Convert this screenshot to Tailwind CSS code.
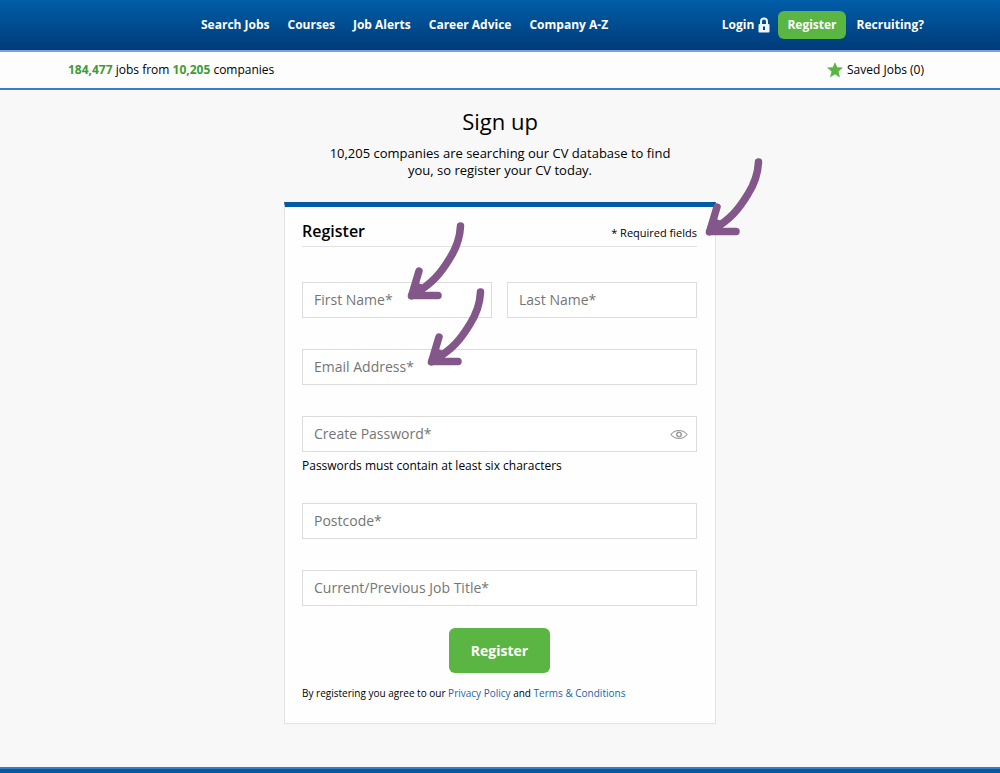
<!DOCTYPE html>
<html lang="en">
<head>
    <meta charset="UTF-8">
    <meta name="viewport" content="width=device-width, initial-scale=1.0">
    <title>Sign up</title>
    <script src="https://cdn.jsdelivr.net/npm/@tailwindcss/browser@4"></script>
</head>
<body class="bg-[#f8f8f8] text-black font-['Open_Sans',sans-serif] text-[12px]">
    <div class="min-h-screen flex flex-col">
        <header class="bg-linear-to-b from-[#005ea8] to-[#003b79] border-b-2 border-[#7f9fdc] text-white font-bold">
            <div class="max-w-[864px] h-[50px] mx-auto pr-2 flex items-center justify-between">
                <nav class="flex gap-[18px] pl-[133px]">
                    <a href="#">Search Jobs</a>
                    <a href="#">Courses</a>
                    <a href="#">Job Alerts</a>
                    <a href="#">Career Advice</a>
                    <a href="#">Company A-Z</a>
                </nav>
                <div class="flex items-center">
                    <a href="#" class="flex items-center gap-1 mr-2">
                        Login
                        <svg class="w-3 h-4" viewBox="0 0 12 16" fill="none">
                            <path d="M3 8V4.500a3 3 0 0 1 6 0V8" stroke="#eef4fb" stroke-width="2"/>
                            <rect x="0.5" y="7" width="11" height="8.5" rx="1" fill="#eef4fb"/>
                            <path d="M6 9.500v3.500" stroke="#00468a" stroke-width="2"/>
                        </svg>
                    </a>
                    <a href="#" class="bg-[#5bb543] rounded-md h-7 px-[9px] flex items-center mr-[11px]">Register</a>
                    <a href="#">Recruiting?</a>
                </div>
            </div>
        </header>

        <div class="bg-[#fdfdfd] border-b-2 border-[#3a7dc6]">
            <div class="max-w-[864px] h-9 mx-auto pr-2 flex items-center justify-between">
                <p><span class="text-[#3f9c35] font-bold">184,477</span> jobs from <span class="text-[#3f9c35] font-bold">10,205</span> companies</p>
                <a href="#" class="flex items-center gap-1">
                    <svg class="w-4 h-4" viewBox="0 0 16 16" fill="#5bb543">
                        <path d="M8 0l2.200 5.300 5.800.300-4.500 3.900L13 15.500l-5-3.200-5 3.200 1.500-6L0 5.600l5.800-.3z"/>
                    </svg>
                    Saved Jobs (0)
                </a>
            </div>
        </div>

        <main class="flex-grow flex flex-col items-center pt-[15px]">
            <h1 class="text-[22px] leading-8">Sign up</h1>
            <p class="w-[350px] mt-2 leading-[17px] text-[13px] text-center">10,205 companies are searching our CV database to find you, so register your CV today.</p>

            <form class="relative w-full max-w-[432px] mt-[23px] mb-[43px] pl-[17px] pr-[18px] bg-[#fefefe] border border-[#e2e2e2] border-t-5 border-t-[#005ba4]">
                <div class="flex items-center justify-between h-10 pt-2 border-b border-[#e2e2e2]">
                    <h2 class="text-[16px] font-semibold">Register</h2>
                    <p class="text-[11px] pt-1.5">* Required fields</p>
                </div>

                <div class="grid grid-cols-2 gap-x-[15px] gap-y-[31px] pt-[35px] text-[14px] leading-[22px]">
                    <div>
                        <label for="firstName" class="sr-only">First Name</label>
                        <input type="text" id="firstName" placeholder="First Name*" class="block w-full py-1.5 px-[11px] bg-white border border-[#dcdcdc] placeholder-[#757575]">
                    </div>
                    <div>
                        <label for="lastName" class="sr-only">Last Name</label>
                        <input type="text" id="lastName" placeholder="Last Name*" class="block w-full py-1.5 px-[11px] bg-white border border-[#dcdcdc] placeholder-[#757575]">
                    </div>
                    <div class="col-span-2">
                        <label for="email" class="sr-only">Email Address</label>
                        <input type="email" id="email" placeholder="Email Address*" class="block w-full py-1.5 px-[11px] bg-white border border-[#dcdcdc] placeholder-[#757575]">
                    </div>
                    <div class="col-span-2">
                        <label for="password" class="sr-only">Create Password</label>
                        <div class="relative">
                            <input type="password" id="password" placeholder="Create Password*" class="block w-full py-1.5 pl-[11px] pr-10 bg-white border border-[#dcdcdc] placeholder-[#757575]">
                            <button type="button" aria-label="Show password" class="absolute right-[9px] top-3">
                                <svg class="block w-[18px] h-3" viewBox="0 0 18 12" fill="none" stroke="#9c9c9c">
                                    <path d="M1 6.500c2-2.700 5-4 8-4s6 1.300 8 4c-2 2.700-5 4-8 4s-6-1.300-8-4z" stroke-width="1.200"/>
                                    <circle cx="9" cy="6.500" r="2.200" stroke-width="1.500"/>
                                </svg>
                            </button>
                        </div>
                        <p class="mt-1 leading-5 text-[12px]">Passwords must contain at least six characters</p>
                    </div>
                    <div class="col-span-2 -mt-1">
                        <label for="postcode" class="sr-only">Postcode</label>
                        <input type="text" id="postcode" placeholder="Postcode*" class="block w-full py-1.5 px-[11px] bg-white border border-[#dcdcdc] placeholder-[#757575]">
                    </div>
                    <div class="col-span-2">
                        <label for="jobTitle" class="sr-only">Current/Previous Job Title</label>
                        <input type="text" id="jobTitle" placeholder="Current/Previous Job Title*" class="block w-full py-1.5 px-[11px] bg-white border border-[#dcdcdc] placeholder-[#757575]">
                    </div>
                </div>

                <button type="submit" class="block mx-auto mt-[22px] w-[101px] h-[45px] rounded-md bg-[#5bb543] text-white text-[14px] font-bold">Register</button>
                <p class="mt-3 mb-[22px] leading-4 text-[10px]">By registering you agree to our <a href="#" class="text-[#1d64a8]">Privacy Policy</a> and <a href="#" class="text-[#1d64a8]">Terms &amp; Conditions</a></p>

                <!-- Pointer arrows -->
                <svg class="absolute left-[419px] -top-[54px] w-[60px] h-[84px] pointer-events-none" viewBox="0 0 60 84" fill="none" stroke="#83578a" stroke-width="7.500" stroke-linecap="round" stroke-linejoin="round">
                    <path d="M54.500 9C54 20 51 30 44 41C35 56 26 67 8 77M13 54L5.500 79M5.500 78.500H32"/>
                    <path d="M5 79L10 65L22 70L16 78z" fill="#83578a" stroke="none"/>
                </svg>
                <svg class="absolute left-[121px] top-[10px] w-[60px] h-[84px] pointer-events-none" viewBox="0 0 60 84" fill="none" stroke="#83578a" stroke-width="7.500" stroke-linecap="round" stroke-linejoin="round">
                    <path d="M54.500 9C54 20 51 30 44 41C35 56 26 67 8 77M13 54L5.500 79M5.500 78.500H32"/>
                    <path d="M5 79L10 65L22 70L16 78z" fill="#83578a" stroke="none"/>
                </svg>
                <svg class="absolute left-[141px] top-[76px] w-[60px] h-[84px] pointer-events-none" viewBox="0 0 60 84" fill="none" stroke="#83578a" stroke-width="7.500" stroke-linecap="round" stroke-linejoin="round">
                    <path d="M54.500 9C54 20 51 30 44 41C35 56 26 67 8 77M13 54L5.500 79M5.500 78.500H32"/>
                    <path d="M5 79L10 65L22 70L16 78z" fill="#83578a" stroke="none"/>
                </svg>
            </form>
        </main>

        <footer class="h-[6px] bg-[#005ba4] border-t-2 border-[#3a7dc6]"></footer>
    </div>
</body>
</html>
